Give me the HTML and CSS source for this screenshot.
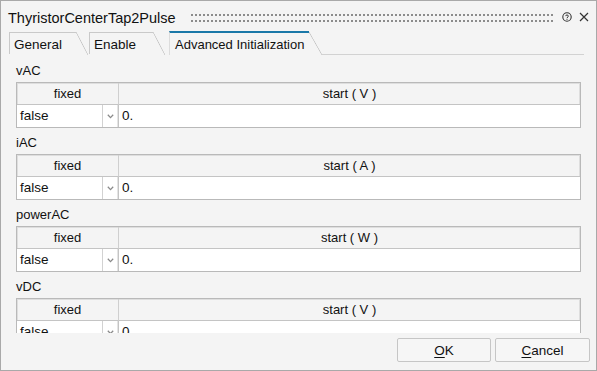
FILE: index.html
```html
<!DOCTYPE html>
<html>
<head>
<meta charset="utf-8">
<link rel="stylesheet" href="styles.css">
</head>
<body>
<div class="window">
  <div class="titlebar">
    <span class="title">ThyristorCenterTap2Pulse</span>
    <span class="grip"></span>
    <svg class="icon help" width="10" height="10" viewBox="0 0 10 10">
      <circle cx="5" cy="5" r="4.2" fill="none" stroke="#333" stroke-width="1.1"/>
      <path d="M3.6 4.1 C3.6 2.6 6.4 2.6 6.4 4.1 C6.4 5 5 5 5 6.1" fill="none" stroke="#333" stroke-width="1"/>
      <rect x="4.5" y="6.8" width="1" height="1" fill="#333"/>
    </svg>
    <svg class="icon close" width="10" height="10" viewBox="0 0 10 10">
      <path d="M1 1 L9 9 M9 1 L1 9" stroke="#333" stroke-width="1.2"/>
    </svg>
  </div>
  <div class="tabs">
    <div class="tab t-general">General</div>
    <div class="tab t-enable">Enable</div>
    <div class="tab active">Advanced Initialization</div>
    <div class="tab-rest"></div>
  </div>
  <div class="content">
    <div class="section">
      <div class="label">vAC</div>
      <div class="ptable">
        <div class="th th-fixed">fixed</div>
        <div class="th">start ( V )</div>
        <div class="td sel">false</div>
        <div class="td arrow"><svg width="7" height="5" viewBox="0 0 7 5"><path d="M0.8 0.8 L3.5 3.6 L6.2 0.8" fill="none" stroke="#8a8a8a" stroke-width="1.3"/></svg></div>
        <div class="td val">0.</div>
      </div>
    </div>
    <div class="section">
      <div class="label">iAC</div>
      <div class="ptable">
        <div class="th th-fixed">fixed</div>
        <div class="th">start ( A )</div>
        <div class="td sel">false</div>
        <div class="td arrow"><svg width="7" height="5" viewBox="0 0 7 5"><path d="M0.8 0.8 L3.5 3.6 L6.2 0.8" fill="none" stroke="#8a8a8a" stroke-width="1.3"/></svg></div>
        <div class="td val">0.</div>
      </div>
    </div>
    <div class="section">
      <div class="label">powerAC</div>
      <div class="ptable">
        <div class="th th-fixed">fixed</div>
        <div class="th">start ( W )</div>
        <div class="td sel">false</div>
        <div class="td arrow"><svg width="7" height="5" viewBox="0 0 7 5"><path d="M0.8 0.8 L3.5 3.6 L6.2 0.8" fill="none" stroke="#8a8a8a" stroke-width="1.3"/></svg></div>
        <div class="td val">0.</div>
      </div>
    </div>
    <div class="section">
      <div class="label">vDC</div>
      <div class="ptable">
        <div class="th th-fixed">fixed</div>
        <div class="th">start ( V )</div>
        <div class="td sel">false</div>
        <div class="td arrow"><svg width="7" height="5" viewBox="0 0 7 5"><path d="M0.8 0.8 L3.5 3.6 L6.2 0.8" fill="none" stroke="#8a8a8a" stroke-width="1.3"/></svg></div>
        <div class="td val">0.</div>
      </div>
    </div>
  </div>
  <div class="buttons">
    <button class="btn"><u>O</u>K</button>
    <button class="btn btn-cancel"><u>C</u>ancel</button>
  </div>
</div>
</body>
</html>
```
FILE: styles.css
```css
* { box-sizing: border-box; }
html, body { margin: 0; padding: 0; }
body {
  width: 597px;
  height: 371px;
  overflow: hidden;
  font-family: "Liberation Sans", Arial, sans-serif;
  color: #111;
  background: #f4f4f4;
}
.window {
  width: 597px;
  height: 371px;
  border: 1px solid #a9a9a9;
  background: #f4f4f4;
  display: flex;
  flex-direction: column;
}
.titlebar {
  height: 30px;
  flex: none;
  display: flex;
  align-items: center;
  padding: 4px 0 0 7px;
}
.title {
  font-size: 14.5px;
  color: #111;
  white-space: nowrap;
}
.grip {
  flex: 1;
  height: 12px;
  margin: 0 9px 0 14px;
  background-image: radial-gradient(circle at center, #8c8c8c 0.9px, transparent 1.2px);
  background-size: 4px 6px;
  background-position: 0 0;
}
.icon { flex: none; display: block; }
.help { margin-right: 7px; margin-top: -2px; }
.close { margin-right: 7px; margin-top: -2px; }

.tabs {
  height: 24px;
  flex: none;
  display: flex;
  align-items: flex-end;
  padding-left: 8px;
  padding-right: 12px;
}
.tab {
  position: relative;
  height: 22px;
  font-size: 13.5px;
  line-height: 23px;
  padding-left: 4px;
  border-top: 1px solid #c9c9c9;
  border-left: 1px solid #c9c9c9;
  white-space: nowrap;
  margin-bottom: 1px;
}
.tab::after {
  content: "";
  position: absolute;
  top: -1px;
  right: -12px;
  width: 12px;
  height: 23px;
  background: linear-gradient(to top right, transparent calc(50% - 0.7px), #c4c4c4 50%, transparent calc(50% + 0.7px));
}
.t-general { width: 67px; margin-right: 13px; }
.t-enable { width: 64px; margin-right: 16px; }
.tab.active {
  width: 140px;
  height: 24px;
  margin-bottom: 0;
  border-top: 2px solid #1a78a8;
  border-left: 1px solid #dcdcdc;
  padding-left: 5px;
  font-size: 13px;
  line-height: 23px;
}
.tab.active::after {
  top: -1px;
  right: -13px;
  width: 13px;
  height: 23px;
}
.tab-rest {
  flex: 1;
  height: 1px;
  margin-left: 13px;
  background: #d2d2d2;
}

.content {
  flex: 1;
  overflow: hidden;
  padding: 1px 15px 0 15px;
}
.label {
  height: 26px;
  padding-top: 7px;
  font-size: 13px;
  line-height: 15px;
}
.ptable {
  display: grid;
  grid-template-columns: 86px 16px 1fr;
  grid-template-rows: 22px 22px;
  border: 1px solid #b9b9b9;
  box-shadow: inset 0 0 0 1px #dedede;
  background: #f4f4f4;
}
.th {
  font-size: 13px;
  text-align: center;
  line-height: 21px;
  border-bottom: 1px solid #c4c4c4;
  white-space: nowrap;
}
.th-fixed {
  grid-column: 1 / 3;
  border-right: 1px solid #cfcfcf;
}
.td {
  background: #fff;
  font-size: 13.5px;
  line-height: 21px;
}
.sel {
  padding-left: 3px;
  border-right: 1px solid #d2d2d2;
}
.arrow {
  display: flex;
  align-items: center;
  justify-content: center;
  border-right: 1px solid #c4c4c4;
  box-shadow: inset -1px 0 0 #e4e4e4;
}
.arrow svg { display: block; margin-right: 1px; }
.val {
  padding-left: 3px;
}

.buttons {
  height: 37px;
  flex: none;
  display: flex;
  justify-content: flex-end;
  gap: 4px;
  padding: 5px 6px 0 0;
}
.btn {
  width: 94px;
  height: 24px;
  font-family: "Liberation Sans", Arial, sans-serif;
  font-size: 13.5px;
  color: #111;
  background: #f6f6f6;
  border: 1px solid #c6c6c6;
  border-radius: 2px;
  padding: 0;
}
.btn-cancel { width: 95px; }
.btn u { text-decoration-thickness: 1px; text-underline-offset: 2px; }
```
